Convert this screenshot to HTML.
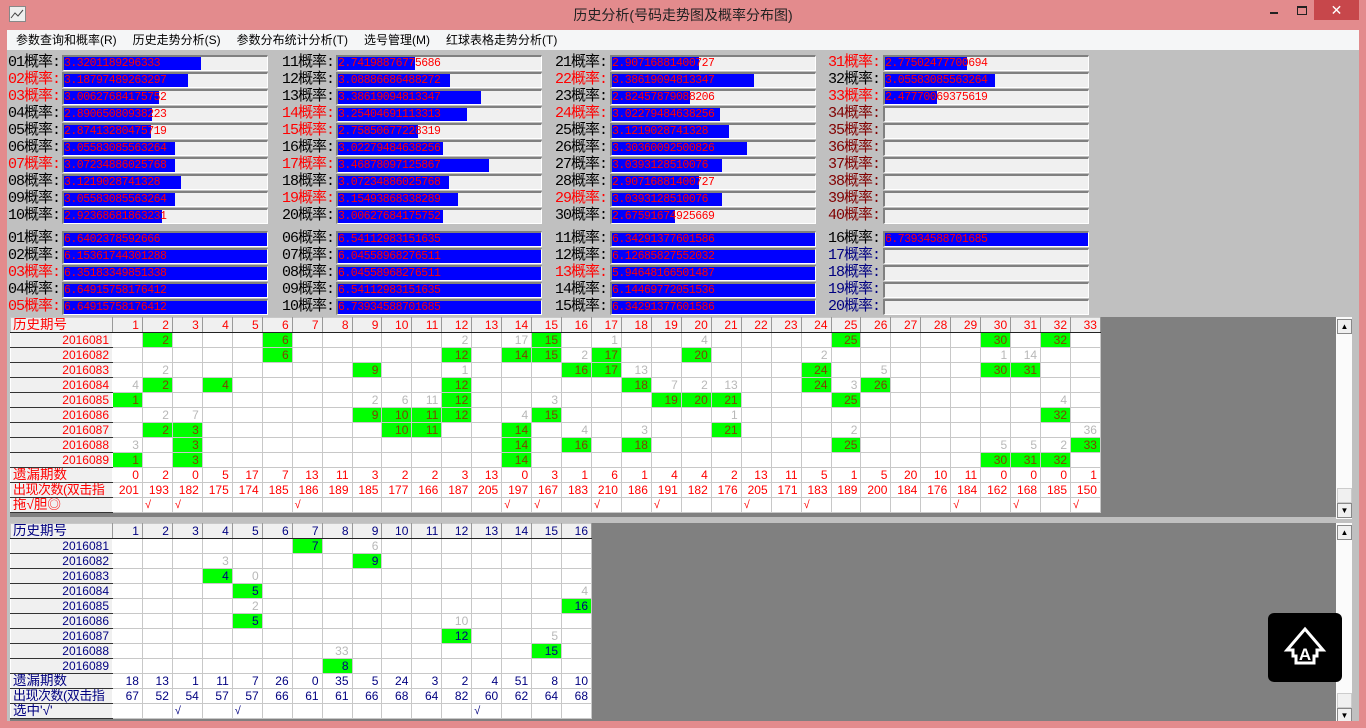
<!DOCTYPE html>
<html><head><meta charset="utf-8">
<style>
*{margin:0;padding:0;box-sizing:border-box}
body{width:1366px;height:728px;overflow:hidden;background:#e38b8d;font-family:"Liberation Sans","Noto Sans CJK SC",sans-serif;position:relative}
.abs{position:absolute}
#title{left:0;top:0;width:1366px;height:30px;text-align:center;font-size:14px;line-height:30px;color:#222}
#menu{left:7px;top:30px;width:1352px;height:20px;background:#f5f6f7;font-size:12px;line-height:20px;color:#000}
#menu span{margin-left:9px;margin-right:7px}
#body{left:7px;top:50px;width:1352px;height:671px;background:#c0c0c0}
.lab{font-family:"Liberation Mono","Noto Sans CJK SC",monospace;font-size:15px;line-height:16px;white-space:nowrap;letter-spacing:-1px}
.box{height:16px;background:#f0f0f0;border-top:2px solid #808080;border-left:2px solid #808080;border-bottom:1px solid #fff;border-right:1px solid #fff;overflow:hidden}
.bar{position:absolute;left:0;top:0;height:14px;background:#0000ff}
.val{position:absolute;left:0;top:0;font-family:"Liberation Mono",monospace;font-size:11.5px;line-height:14px;color:#ff0000;white-space:nowrap;letter-spacing:-0.5px}
.panel{background:#808080}
table{border-collapse:collapse;table-layout:fixed;position:absolute;left:0;top:0;background:#fff}
td{height:15px;font-family:"Liberation Sans","Noto Sans CJK SC",sans-serif;font-size:12px;line-height:14px;text-align:right;padding:0 3px 0 0;border:1px solid #c8c8c8;white-space:nowrap;overflow:hidden}
td.l{background:#f0f0f0;border:1px solid #fff;border-bottom:1px solid #333}
td.h{background:#f0f0f0;border-right:1px solid #999;border-bottom:1px solid #222}
td.rl{text-align:left;padding-left:2px;font-size:13.5px}
.g{background:#00ff00}
.gy{color:#b8b8b8}
.sb{width:16px;background:#fbfbfb}
.arr{width:15px;height:15px;background:#f0f0f0;border:1px solid #888;font-size:8px;line-height:13px;text-align:center;color:#000}
</style></head><body>
<div id="title" class="abs">历史分析(号码走势图及概率分布图)</div>
<svg class="abs" style="left:9px;top:6px" width="17" height="16"><rect x="0.5" y="0.5" width="16" height="15" fill="#eee" stroke="#888"/><path d="M2 12 L6 7 L9 10 L14 4" stroke="#444" fill="none"/></svg>
<div class="abs" style="left:1270px;top:12px;width:8px;height:2px;background:#222"></div>
<div class="abs" style="left:1297px;top:6px;width:10px;height:9px;border:1px solid #222;border-top-width:2px"></div>
<div class="abs" style="left:1314px;top:0;width:45px;height:20px;background:#c7474b;color:#fff;font-size:14px;text-align:center;line-height:20px">✕</div>
<div id="menu" class="abs"><span>参数查询和概率(R)</span><span>历史走势分析(S)</span><span>参数分布统计分析(T)</span><span>选号管理(M)</span><span>红球表格走势分析(T)</span></div>
<div id="body" class="abs"></div>
<div id="probs"></div>
<div class="abs panel" style="left:10px;top:317px;width:1326px;height:200px"><div id="t1"></div></div>
<div class="abs panel" style="left:10px;top:523px;width:1326px;height:198px"><div id="t2"></div></div>
<div class="abs sb" style="left:1336px;top:317px;height:202px"></div>
<div class="abs arr" style="left:1337px;top:319px">▲</div>
<div class="abs arr" style="left:1337px;top:488px;border-color:#ccc"></div>
<div class="abs arr" style="left:1337px;top:503px">▼</div>
<div class="abs sb" style="left:1336px;top:523px;height:198px"></div>
<div class="abs arr" style="left:1337px;top:525px">▲</div>
<div class="abs arr" style="left:1337px;top:693px;border-color:#ccc"></div>
<div class="abs arr" style="left:1337px;top:708px">▼</div>
<div class="abs" style="left:0;top:721px;width:1366px;height:7px;background:#e38b8d"></div>
<svg class="abs" style="left:1268px;top:613px" width="74" height="69"><rect width="74" height="69" rx="6" fill="#000"/><path d="M37 16 L55 37 L49 37 L49 43 L46 43 L46 50 L28 50 L28 43 L25 43 L25 37 L19 37 Z" fill="none" stroke="#fff" stroke-width="3" stroke-linejoin="miter"/><text x="37" y="47" font-family="Liberation Sans" font-weight="bold" font-size="17" fill="#fff" text-anchor="middle">A</text></svg>
<script>
var R='#ff0000',K='#000',D='#800000',N='#000080';
var cols=[[8,62],[282,336],[555,610],[828,883]];
var g1=[
[['01',K,'3.3201189296333',137],['02',R,'3.18797489263297',124],['03',R,'3.00627684175752',95],['04',K,'2.89065080938223',88],['05',K,'2.87413280475719',87],['06',K,'3.05583085563264',111],['07',R,'3.07234886025768',111],['08',K,'3.1219028741328',117],['09',K,'3.05583085563264',111],['10',K,'2.92368681863231',98]],
[['11',K,'2.74198876775686',77],['12',K,'3.08886686488272',112],['13',K,'3.38619094813347',143],['14',R,'3.25404691113313',129],['15',R,'2.75850677228319',80],['16',K,'3.02279484638256',105],['17',R,'3.46878097125867',151],['18',K,'3.07234886025768',111],['19',R,'3.15493868338289',120],['20',K,'3.00627684175752',105]],
[['21',K,'2.90716881400727',87],['22',R,'3.38619094813347',142],['23',K,'2.82457879088206',78],['24',R,'3.02279484638256',108],['25',K,'3.1219028741328',117],['26',K,'3.30360092500826',135],['27',K,'3.0393128510076',110],['28',K,'2.90716881400727',87],['29',R,'3.0393128510076',110],['30',K,'2.67591674925669',63]],
[['31',R,'2.77502477700694',82],['32',K,'3.05583085563264',110],['33',R,'2.47770069375619',52],['34',D,'',0],['35',D,'',0],['36',D,'',0],['37',D,'',0],['38',D,'',0],['39',D,'',0],['40',D,'',0]]];
var g2=[
[['01',K,'6.6402378592666'],['02',K,'6.15361744301288'],['03',R,'6.35183349851338'],['04',K,'6.64915758176412'],['05',R,'6.64915758176412']],
[['06',K,'6.54112983151635'],['07',K,'6.04558968276511'],['08',K,'6.04558968276511'],['09',K,'6.54112983151635'],['10',K,'6.73934588701685']],
[['11',K,'6.34291377601586'],['12',K,'6.12685827552032'],['13',R,'5.94648166501487'],['14',K,'6.14469772051536'],['15',K,'6.34291377601586']],
[['16',K,'6.73934588701685'],['17',N,''],['18',N,''],['19',N,''],['20',N,'']]];
var h='';
function row(c,y,it,full){var bw=full?(it[2]?203:0):it[3];
h+='<div class="abs lab" style="left:'+cols[c][0]+'px;top:'+(y)+'px;color:'+it[1]+'">'+it[0]+'概率:</div>';
h+='<div class="abs box" style="left:'+cols[c][1]+'px;top:'+(y)+'px;width:206px">'+(bw?'<div class="bar" style="width:'+bw+'px"></div>':'')+'<div class="val">'+it[2]+'</div></div>';}
for(var c=0;c<4;c++){for(var r=0;r<10;r++)row(c,55+r*17,g1[c][r],false);for(var r=0;r<5;r++)row(c,231+r*17,g2[c][r],true);}
document.getElementById('probs').innerHTML=h;
function grid(id,n,color,rows,miss,cnt,lastLab,checks,txtG){
var W=29.94;
var s='<table style="width:'+(102+n*W)+'px;border:1px solid '+(color==R?'#c00':'#00f')+'"><colgroup><col style="width:102px">';
for(var i=0;i<n;i++)s+='<col style="width:'+W+'px">';s+='</colgroup><tr><td class="h rl" style="color:'+color+'">历史期号</td>';
for(var i=1;i<=n;i++)s+='<td class="h" style="color:'+color+'">'+i+'</td>';s+='</tr>';
for(var r=0;r<9;r++){s+='<tr><td class="l" style="color:'+color+'">'+(2016081+r)+'</td>';var m=rows[r];
for(var i=1;i<=n;i++){var v=m[i];if(v===undefined)s+='<td></td>';else if(v[0]=='G')s+='<td class="g" style="color:'+txtG+'">'+v.slice(1)+'</td>';else s+='<td class="gy">'+v+'</td>';}s+='</tr>';}
s+='<tr><td class="l rl" style="color:'+color+'">遗漏期数</td>';for(var i=0;i<n;i++)s+='<td style="color:'+color+'">'+miss[i]+'</td>';s+='</tr>';
s+='<tr><td class="l rl" style="color:'+color+';font-size:13px;letter-spacing:-0.5px">出现次数(双击指</td>';for(var i=0;i<n;i++)s+='<td style="color:'+color+'">'+cnt[i]+'</td>';s+='</tr>';
s+='<tr><td class="l rl" style="color:'+color+'">'+lastLab+'</td>';for(var i=1;i<=n;i++)s+='<td style="text-align:left;padding-left:2px;font-size:11px;font-style:italic;color:'+color+'">'+(checks.indexOf(i)>=0?'√':'')+'</td>';s+='</tr></table>';
document.getElementById(id).innerHTML=s;}
function P(str){var o={};str.split(' ').forEach(function(t){var a=t.split(':');o[+a[0]]=a[1];});return o;}
var up=[P('2:G2 6:G6 12:2 14:17 15:G15 17:1 20:4 25:G25 30:G30 32:G32'),P('6:G6 12:G12 14:G14 15:G15 16:2 17:G17 20:G20 24:2 30:1 31:14'),P('2:2 9:G9 12:1 16:G16 17:G17 18:13 24:G24 26:5 30:G30 31:G31'),P('1:4 2:G2 4:G4 12:G12 18:G18 19:7 20:2 21:13 24:G24 25:3 26:G26'),P('1:G1 9:2 10:6 11:11 12:G12 15:3 19:G19 20:G20 21:G21 25:G25 32:4'),P('2:2 3:7 9:G9 10:G10 11:G11 12:G12 14:4 15:G15 21:1 32:G32'),P('2:G2 3:G3 10:G10 11:G11 14:G14 16:4 18:3 21:G21 25:2 33:36'),P('1:3 3:G3 14:G14 16:G16 18:G18 25:G25 30:5 31:5 32:2 33:G33'),P('1:G1 3:G3 14:G14 30:G30 31:G31 32:G32')];
grid('t1',33,R,up,'0 2 0 5 17 7 13 11 3 2 2 3 13 0 3 1 6 1 4 4 2 13 11 5 1 5 20 10 11 0 0 0 1'.split(' '),'201 193 182 175 174 185 186 189 185 177 166 187 205 197 167 183 210 186 191 182 176 205 171 183 189 200 184 176 184 162 168 185 150'.split(' '),'拖√胆◎',[2,3,7,14,15,17,19,22,24,29,31,33],'#804000');
var lo=[P('7:G7 9:6'),P('4:3 9:G9'),P('4:G4 5:0'),P('5:G5 16:4'),P('5:2 16:G16'),P('5:G5 12:10'),P('12:G12 15:5'),P('8:33 15:G15'),P('8:G8')];
grid('t2',16,N,lo,'18 13 1 11 7 26 0 35 5 24 3 2 4 51 8 10'.split(' '),'67 52 54 57 57 66 61 61 66 68 64 82 60 62 64 68'.split(' '),'选中\'√\'',[3,5,13],'#000080');
</script>
</body></html>
